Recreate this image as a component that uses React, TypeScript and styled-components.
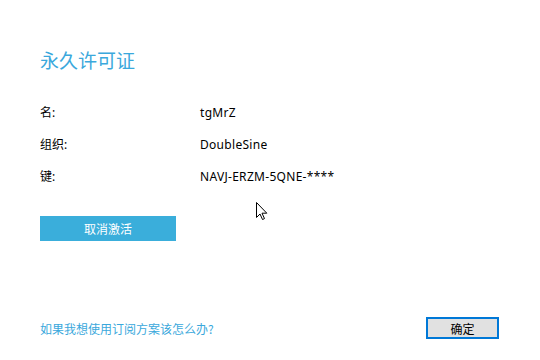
import React from "react";
import styled, { createGlobalStyle } from "styled-components";

const GlobalStyle = createGlobalStyle`
  html, body {
    margin: 0;
    padding: 0;
    background: #ffffff;
  }
  body {
    font-family: "Noto Sans", "Noto Sans CJK SC", sans-serif;
  }
`;

const Page = styled.div`
  position: relative;
  width: 540px;
  height: 360px;
  box-sizing: border-box;
  padding: 44px 41px 21px 40px;
  display: flex;
  flex-direction: column;
  background: #ffffff;
  overflow: hidden;
`;

const Title = styled.h1`
  margin: 0;
  font-family: "Noto Sans CJK SC", sans-serif;
  font-weight: 400;
  font-size: 19px;
  line-height: 32px;
  color: #3aa8dc;
`;

const InfoGrid = styled.div`
  display: grid;
  grid-template-columns: 160px auto;
  grid-auto-rows: 32px;
  align-items: center;
  margin-top: 20px;
  font-size: 12px;
  color: #000000;
`;

const Label = styled.div`
  font-family: "Noto Sans", "Noto Sans CJK SC", sans-serif;
`;

const Value = styled.div`
  font-family: "Noto Sans", "Noto Sans CJK SC", sans-serif;
  letter-spacing: 0.3px;
`;

const DeactivateButton = styled.button`
  margin-top: 24px;
  width: 136px;
  height: 25px;
  border: none;
  padding: 0;
  background: #3aaedb;
  color: #ffffff;
  font-family: "Noto Sans CJK SC", sans-serif;
  font-size: 12px;
  cursor: default;
`;

const Footer = styled.div`
  margin-top: auto;
  display: flex;
  align-items: center;
  justify-content: space-between;
`;

const HelpLink = styled.a`
  font-family: "Noto Sans CJK SC", sans-serif;
  font-size: 12px;
  color: #3aa8dc;
  text-decoration: none;
`;

const OkButton = styled.button`
  width: 73px;
  height: 22px;
  box-sizing: border-box;
  border: 2px solid #0078d7;
  background: #e1e1e1;
  color: #000000;
  font-family: "Noto Sans CJK SC", sans-serif;
  font-size: 12px;
  padding: 0;
`;

const Cursor = styled.svg`
  position: absolute;
  left: 256px;
  top: 202px;
`;

const rows = [
  { label: "名:", value: "tgMrZ" },
  { label: "组织:", value: "DoubleSine" },
  { label: "键:", value: "NAVJ-ERZM-5QNE-****" },
];

const App = () => {
  return (
    <>
      <GlobalStyle />
      <Page>
        <Title>永久许可证</Title>
        <InfoGrid>
          {rows.map((r) => (
            <React.Fragment key={r.label}>
              <Label>{r.label}</Label>
              <Value>{r.value}</Value>
            </React.Fragment>
          ))}
        </InfoGrid>
        <div>
          <DeactivateButton>取消激活</DeactivateButton>
        </div>
        <Footer>
          <HelpLink href="#">如果我想使用订阅方案该怎么办?</HelpLink>
          <OkButton>确定</OkButton>
        </Footer>
        <Cursor width="12" height="19" viewBox="0 0 12 19">
          <path
            d="M0.5 0.5 L0.5 15.5 L4 12 L6.5 17.5 L8.5 16.6 L6 11.2 L10.8 11.2 Z"
            fill="#ffffff"
            stroke="#000000"
            strokeWidth="1"
            strokeLinejoin="miter"
          />
        </Cursor>
      </Page>
    </>
  );
};

export default App;
